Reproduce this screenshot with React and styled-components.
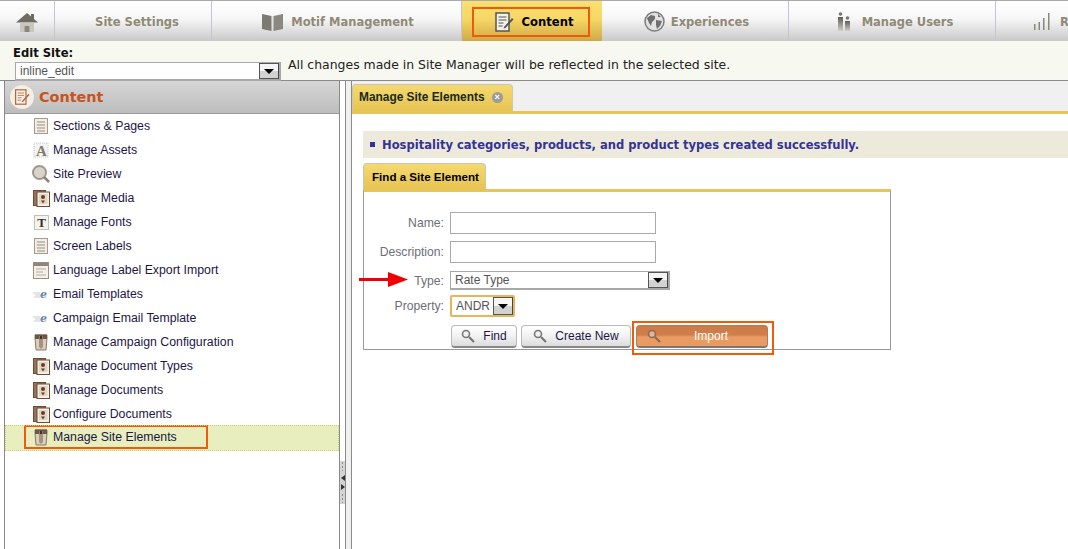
import React from 'react';
import styled, { createGlobalStyle } from 'styled-components';

const Global = createGlobalStyle`
  html, body { margin: 0; padding: 0; height: 100%; overflow: hidden; background: #fff; }
  body { font-family: "Liberation Sans", Arial, sans-serif; font-size: 12px; color: #000; }
  * { box-sizing: border-box; }
`;

const Page = styled.div`
  position: relative;
  width: 1068px;
  height: 549px;
  display: flex;
  flex-direction: column;
  overflow: hidden;
`;

const TopNav = styled.div`
  height: 41px;
  flex: none;
  display: flex;
  border-top: 1px solid #a9a9a9;
  background: linear-gradient(#ffffff 0%, #f6f6f6 45%, #c9c9c9 100%);
`;

const NavItem = styled.div`
  flex: none;
  width: ${({ $w }) => $w}px;
  height: 100%;
  display: flex;
  align-items: center;
  justify-content: ${({ $start }) => ($start ? 'flex-start' : 'center')};
  gap: ${({ $gap }) => $gap ?? 8}px;
  padding-top: 1px;
  padding-left: ${({ $pl }) => $pl ?? 0}px;
  border-right: ${({ $last }) => ($last ? '0' : '1px solid #c4c4d4')};
  font-family: "DejaVu Sans", Verdana, sans-serif;
  font-weight: 700;
  font-size: 11.5px;
  color: #8f8a76;
  white-space: nowrap;
`;

const ActiveItem = styled.div`
  flex: none;
  width: 140px;
  height: 100%;
  padding: 7px 12px 3px 10px;
  background: linear-gradient(#fbdf72 0%, #f6d766 45%, #cfa946 100%);
  font-family: "DejaVu Sans", Verdana, sans-serif;
  font-weight: 700;
  font-size: 11.6px;
`;

const ActiveBox = styled.div`
  height: 30px;
  display: flex;
  align-items: center;
  justify-content: center;
  gap: 8px;
  padding-left: 5px;
  border: 2px solid #f25a0b;
  margin-top: -1px;
`;

const SiteBar = styled.div`
  height: 40px;
  flex: none;
  display: flex;
  flex-direction: column;
  padding: 5px 0 0 13px;
  background: #f7f8f0;
  border-bottom: 1px solid #8a8a8a;
  font-family: "DejaVu Sans", Verdana, sans-serif;
`;

const SiteLabel = styled.div`
  font-weight: 700;
  font-size: 11.6px;
  line-height: 15px;
  color: #111;
`;

const SiteRow = styled.div`
  display: flex;
  align-items: flex-start;
  margin: 1px 0 0 2px;
`;

const SiteNote = styled.div`
  font-size: 12.45px;
  line-height: 15px;
  margin: -5px 0 0 7px;
  color: #222;
  white-space: nowrap;
`;

const SelectBox = styled.div`
  width: ${({ $w }) => $w}px;
  height: ${({ $h }) => $h}px;
  flex: none;
  display: flex;
  align-items: center;
  justify-content: space-between;
  padding: 0 0 0 4px;
  background: #fff;
  border: ${({ $focus }) => ($focus ? '2px solid #e8b45c' : '2px solid #a8a8a8')};
  border-width: ${({ $focus }) => ($focus ? '2px' : '1px 2px 2px 1px')};
  border-radius: ${({ $focus }) => ($focus ? '2px' : '0')};
  font-family: "Liberation Sans", Arial, sans-serif;
  font-size: 12px;
  color: #555;
`;

const SelectArrow = styled.div`
  width: 20px;
  height: 100%;
  flex: none;
  display: flex;
  align-items: center;
  justify-content: center;
  border: 1px solid #555;
  border-right-color: #444;
  background: linear-gradient(#f5f5f5 50%, #d2d2d2 50%);
  &::after {
    content: '';
    border-left: 5px solid transparent;
    border-right: 5px solid transparent;
    border-top: 5px solid #000;
  }
`;

const Body = styled.div`
  flex: 1;
  display: flex;
  min-height: 0;
`;

const LeftPanel = styled.div`
  width: 336px;
  margin-left: 4px;
  flex: none;
  border-left: 1px solid #8a8a8a;
  border-right: 1px solid #8a8a8a;
`;

const PanelHead = styled.div`
  height: 33px;
  display: flex;
  align-items: center;
  gap: 5px;
  padding-left: 5px;
  background: linear-gradient(#d6d6d6, #bdbdbd);
  border-bottom: 1px solid #9a9a9a;
  font-family: "DejaVu Sans", Verdana, sans-serif;
  font-weight: 700;
  font-size: 14.4px;
  color: #c8531c;
`;

const Badge = styled.div`
  width: 24px;
  height: 24px;
  border-radius: 50%;
  background: #f4efe6;
  display: flex;
  align-items: center;
  justify-content: center;
`;

const MenuRow = styled.div`
  height: ${({ $selected }) => ($selected ? '26px' : '24px')};
  margin-top: ${({ $selected }) => ($selected ? '-1px' : '0')};
  display: flex;
  align-items: ${({ $selected }) => ($selected ? 'flex-start' : 'center')};
  padding-left: ${({ $selected }) => ($selected ? '19px' : '24px')};
  background: ${({ $selected }) => ($selected ? '#e8eebd' : 'transparent')};
  outline: ${({ $selected }) => ($selected ? '1px dotted #cfcf80' : 'none')};
  outline-offset: -1px;
`;

const MenuMark = styled.div`
  display: flex;
  align-items: center;
  height: 24px;
  width: ${({ $selected }) => ($selected ? '184px' : 'auto')};
  border: ${({ $selected }) => ($selected ? '2px solid #f25a0b' : '0')};
  padding-left: ${({ $selected }) => ($selected ? '3px' : '0')};
`;

const MenuIconCell = styled.div`
  width: 24px;
  height: 18px;
  flex: none;
  display: flex;
  align-items: center;
  justify-content: center;
`;

const MenuText = styled.span`
  font-size: 12.3px;
  color: #1d1647;
  white-space: nowrap;
`;

const Splitter = styled.div`
  width: 5px;
  flex: none;
  padding-top: 380px;
`;

const Handle = styled.div`
  width: 5px;
  height: 43px;
  background: #d4d4d4;
  display: flex;
  flex-direction: column;
  align-items: center;
  justify-content: center;
  gap: 3px;
`;

const HandleLeft = styled.div`
  border-top: 3px solid transparent;
  border-bottom: 3px solid transparent;
  border-right: 4px solid #333;
`;

const HandleRight = styled(HandleLeft)`
  border-right: 0;
  border-left: 4px solid #333;
`;

const HandleDash = styled.div`
  width: 1px;
  height: 10px;
  margin: 1px 0;
  background: repeating-linear-gradient(#888 0 2px, transparent 2px 4px);
`;

const Gutter = styled.div`
  width: 7px;
  flex: none;
  background: #f0f0f0;
  border-left: 1px solid #8a8a8a;
  border-right: 1px solid #8a8a8a;
`;

const Main = styled.div`
  flex: 1;
  min-width: 0;
  display: flex;
  flex-direction: column;
`;

const TabStrip = styled.div`
  height: 33px;
  flex: none;
  display: flex;
  align-items: flex-end;
  background: #f0f0f0;
  border-bottom: 3px solid #e5c65a;
`;

const MainTab = styled.div`
  height: 27px;
  width: 161px;
  display: flex;
  align-items: center;
  gap: 7px;
  padding: 0 0 2px 6px;
  background: linear-gradient(#f5d970, #e7c452);
  border: 1px solid #c9c9b0;
  border-bottom: 0;
  border-radius: 4px 4px 0 0;
  font-weight: 700;
  font-size: 11.9px;
  color: #1a2a1a;
  white-space: nowrap;
`;

const CloseDot = styled.div`
  width: 11px;
  height: 11px;
  border-radius: 50%;
  background: #9b9b9b;
  color: #fff;
  font-size: 9px;
  line-height: 11px;
  text-align: center;
`;

const Content = styled.div`
  padding: 17px 0 0 11px;
`;

const Message = styled.div`
  height: 27px;
  display: flex;
  align-items: center;
  gap: 7px;
  padding-left: 7px;
  background: #eeeadb;
  font-family: "DejaVu Sans", Verdana, sans-serif;
  font-weight: 700;
  font-size: 11.55px;
  color: #333399;
  white-space: nowrap;
`;

const Bullet = styled.span`
  width: 5px;
  height: 5px;
  background: #333399;
  flex: none;
`;

const FindTab = styled.div`
  width: 123px;
  height: 26px;
  margin-top: 5px;
  display: flex;
  align-items: center;
  justify-content: center;
  padding-left: 2px;
  background: linear-gradient(#f5d970, #e7c452);
  border: 1px solid #c9c9b0;
  border-bottom: 0;
  border-radius: 4px 4px 0 0;
  font-weight: 700;
  font-size: 11.6px;
`;

const FormBox = styled.div`
  width: 528px;
  height: 161px;
  border: 1px solid #999;
  border-top: 3px solid #e5c65a;
  padding-top: 20px;
`;

const FormRow = styled.div`
  display: flex;
  align-items: center;
  height: ${({ $h }) => $h}px;
  margin-bottom: ${({ $mb }) => $mb}px;
`;

const FormLabel = styled.label`
  width: 80px;
  flex: none;
  text-align: right;
  color: #6e6e78;
  font-size: 12.2px;
`;

const TextBox = styled.input`
  width: 206px;
  height: 22px;
  margin-left: 6px;
  border: 1px solid #aaa;
  background: #fff;
  padding: 0 4px;
`;

const SelectSlot = styled.div`
  margin-left: 6px;
`;

const ButtonRow = styled.div`
  display: flex;
  align-items: flex-start;
  gap: 4px;
  padding-left: 87px;
`;

const Button = styled.button`
  width: ${({ $w }) => $w}px;
  height: 23px;
  display: flex;
  align-items: center;
  justify-content: center;
  gap: ${({ $gap }) => $gap ?? 8}px;
  padding: 0;
  border: 1px solid #bbb;
  border-bottom: 2px solid #888;
  border-radius: 4px;
  background: linear-gradient(#ffffff, #f2f2f2 50%, #dcdcdc);
  font-family: inherit;
  font-size: 12px;
  color: #1d1647;
`;

const ImportMark = styled.div`
  border: 2px solid #f25a0b;
  padding: 2px 4px 5px 2px;
  margin: -4px 0 -7px -3px;
`;

const ImportButton = styled(Button)`
  border-color: #b57a4f;
  border-bottom-color: #777;
  background: linear-gradient(#cd7a48 0%, #cf7f4c 45%, #ea9d63 55%, #e89a60 100%);
  color: #fff;
  justify-content: flex-start;
  padding-left: 10px;
  gap: 33px;
`;

const ArrowFloat = styled.div`
  position: absolute;
  left: 359px;
  top: 272px;
  line-height: 0;
`;

const Doc = () => (
  <svg width="14" height="16" viewBox="0 0 14 16">
    <rect x="0.5" y="0.5" width="13" height="15" fill="#f1ece4" stroke="#a89a8c" />
    <path d="M3 4h8M3 7h8M3 10h8M3 13h8" stroke="#9a9186" />
  </svg>
);

const AssetA = () => (
  <svg width="17" height="16" viewBox="0 0 17 16">
    <rect x="1" y="1" width="14" height="14" fill="#f3f3f3" stroke="#c8c8c8" strokeDasharray="1 1" />
    <text x="8.500" y="14" textAnchor="middle" fontFamily="Liberation Serif, serif" fontWeight="700" fontSize="15" fill="#85796c">A</text>
  </svg>
);

const Magnifier = () => (
  <svg width="18" height="18" viewBox="0 0 18 18">
    <circle cx="7.5" cy="7.5" r="6.5" fill="#d8d4cd" stroke="#a0978c" strokeWidth="2" />
    <path d="M12 12l5 5" stroke="#8d8377" strokeWidth="2.5" />
  </svg>
);

const Media = () => (
  <svg width="17" height="17" viewBox="0 0 17 17">
    <rect x="0.5" y="0.5" width="12" height="15" fill="#9a7258" stroke="#6b4a36" />
    <rect x="4" y="2" width="12.5" height="14.500" fill="#f4efe6" stroke="#6b4a36" />
    <rect x="6" y="4" width="8.5" height="10" fill="#e0d6c6" />
    <circle cx="10" cy="7" r="2" fill="#6b3a20" />
    <path d="M8 10.500h4l-2 3z" fill="#6b3a20" />
  </svg>
);

const FontT = () => (
  <svg width="15" height="15" viewBox="0 0 15 15">
    <rect x="0.5" y="0.5" width="14" height="14" fill="#f5f3ee" stroke="#c5c0b5" />
    <text x="7.5" y="12" textAnchor="middle" fontFamily="Liberation Serif, serif" fontWeight="700" fontSize="13" fill="#333">T</text>
  </svg>
);

const Lang = () => (
  <svg width="16" height="17" viewBox="0 0 16 17">
    <rect x="0.5" y="0.5" width="15" height="16" fill="#f4f0e8" stroke="#9a8f82" />
    <rect x="1" y="1" width="14" height="3" fill="#8f8578" />
    <path d="M3 7h10M3 10h7M3 13h10" stroke="#b4aca0" />
  </svg>
);

const Email = () => (
  <svg width="16" height="12" viewBox="0 0 16 12">
    <path d="M0 5h7M2 7h5M1 9h6" stroke="#c9c9c9" />
    <text x="7" y="10" fontFamily="DejaVu Serif, serif" fontStyle="italic" fontWeight="700" fontSize="11" fill="#5f85a8">e</text>
  </svg>
);

const KeyDoc = () => (
  <svg width="14" height="18" viewBox="0 0 14 18">
    <path d="M1 2h12v3l-1 12H2L1 5z" fill="#d9cfc0" stroke="#8a7a68" />
    <path d="M1 1.500h12V6H1z" fill="#6d5847" />
    <path d="M5 3h4v11l-2 2-2-2z" fill="#a8937a" />
    <rect x="5.800" y="3" width="2.400" height="3" fill="#3f3025" />
  </svg>
);

const HomeIcon = () => (
  <svg width="22" height="20" viewBox="0 0 22 20">
    <path d="M15 2h3v5h-3z" fill="#6f6b60" />
    <path d="M11 1L0 10.500h22z" fill="#6f6b60" />
    <path d="M4 10.500h14V20h-4.500v-6h-5v6H4z" fill="#c9c7bd" />
    <path d="M8.500 14h5v6h-5z" fill="#8a8578" />
  </svg>
);

const BookIcon = () => (
  <svg width="21" height="18" viewBox="0 0 21 18">
    <path d="M0 1l9.500 2v15L0 16z" fill="#7c7a72" />
    <path d="M21 1l-9.500 2v15L21 16z" fill="#8a8880" />
    <path d="M10 3h1v15h-1z" fill="#e0e0e0" />
  </svg>
);

const EditIcon = ({ size = 20, stroke = '#555' }) => (
  <svg width={size} height={size} viewBox="0 0 20 20">
    <rect x="2" y="1" width="13" height="18" fill="#f3f1e9" stroke={stroke} strokeWidth="1.500" />
    <path d="M4.500 5h8M4.500 8h8M4.500 11h5M4.500 14h4" stroke={stroke} />
    <path d="M10 15l8-9 1.500 1.500-8 8.500-2 .5z" fill={stroke} />
  </svg>
);

const GlobeIcon = () => (
  <svg width="21" height="21" viewBox="0 0 21 21">
    <circle cx="10.500" cy="10.500" r="9.500" fill="#e2e2e2" stroke="#7d7d7d" strokeWidth="1.500" />
    <path d="M3 7l4-3 4 1 0 3-3 3-1 4-2-3zM12 9l6 1-2 5-3 3-1-4zM14 3l3 3-3 0z" fill="#6f6f6f" />
  </svg>
);

const UsersIcon = () => (
  <svg width="14" height="19" viewBox="0 0 14 19">
    <defs>
      <linearGradient id="userFade" x1="0" y1="0" x2="0" y2="1">
        <stop offset="0" stopColor="#5f5d55" />
        <stop offset="1" stopColor="#d0d0cc" />
      </linearGradient>
    </defs>
    <circle cx="3.500" cy="2" r="1.800" fill="#77756c" />
    <rect x="1" y="5" width="5" height="14" fill="url(#userFade)" />
    <circle cx="10.500" cy="6" r="1.800" fill="#77756c" />
    <rect x="8" y="9" width="5" height="10" fill="url(#userFade)" />
  </svg>
);

const BarsIcon = () => (
  <svg width="19" height="19" viewBox="0 0 19 19">
    <path d="M1 12h1.500v6H1zM5.500 10H7v8H5.500zM10 6h1.500v12H10zM15 1h1.500v17H15z" fill="#8a887e" />
  </svg>
);

const SearchGlyph = ({ color = '#777' }) => (
  <svg width="14" height="14" viewBox="0 0 14 14">
    <circle cx="5" cy="5" r="3.500" fill="#eee" fillOpacity="0.5" stroke={color} strokeWidth="1.600" />
    <path d="M8 8l5 5" stroke={color} strokeWidth="2.200" />
  </svg>
);

const RedArrow = () => (
  <svg width="49" height="15" viewBox="0 0 49 15">
    <path d="M0 6h29V0l20 7.500L29 15V9H0z" fill="#f00000" />
  </svg>
);

const menu = [
  ['Sections & Pages', Doc],
  ['Manage Assets', AssetA],
  ['Site Preview', Magnifier],
  ['Manage Media', Media],
  ['Manage Fonts', FontT],
  ['Screen Labels', Doc],
  ['Language Label Export Import', Lang],
  ['Email Templates', Email],
  ['Campaign Email Template', Email],
  ['Manage Campaign Configuration', KeyDoc],
  ['Manage Document Types', Media],
  ['Manage Documents', Media],
  ['Configure Documents', Media],
  ['Manage Site Elements', KeyDoc, true],
];

export default function App() {
  return (
    <Page>
      <Global />
      <TopNav>
        <NavItem $w={55}><HomeIcon /></NavItem>
        <NavItem $w={157} $pl={8}>Site Settings</NavItem>
        <NavItem $w={250} $pl={3}><BookIcon />Motif Management</NavItem>
        <ActiveItem>
          <ActiveBox><EditIcon />Content</ActiveBox>
        </ActiveItem>
        <NavItem $w={187} $pl={3} $gap={6}><GlobeIcon />Experiences</NavItem>
        <NavItem $w={207} $pl={6} $gap={11}><UsersIcon />Manage Users</NavItem>
        <NavItem $w={150} $start $pl={37} $last><BarsIcon />Reports</NavItem>
      </TopNav>

      <SiteBar>
        <SiteLabel>Edit Site:</SiteLabel>
        <SiteRow>
          <SelectBox $w={266} $h={19}>inline_edit<SelectArrow /></SelectBox>
          <SiteNote>All changes made in Site Manager will be reflected in the selected site.</SiteNote>
        </SiteRow>
      </SiteBar>

      <Body>
        <LeftPanel>
          <PanelHead>
            <Badge><EditIcon size={16} stroke="#b4683a" /></Badge>
            Content
          </PanelHead>
          <div>
            {menu.map(([label, Icon, selected]) => (
              <MenuRow key={label} $selected={selected}>
                <MenuMark $selected={selected}>
                  <MenuIconCell><Icon /></MenuIconCell>
                  <MenuText>{label}</MenuText>
                </MenuMark>
              </MenuRow>
            ))}
          </div>
        </LeftPanel>

        <Splitter>
          <Handle>
            <HandleDash />
            <HandleLeft />
            <HandleRight />
            <HandleDash />
          </Handle>
        </Splitter>
        <Gutter />

        <Main>
          <TabStrip>
            <MainTab>Manage Site Elements<CloseDot>×</CloseDot></MainTab>
          </TabStrip>
          <Content>
            <Message><Bullet />Hospitality categories, products, and product types created successfully.</Message>
            <FindTab>Find a Site Element</FindTab>
            <FormBox>
              <FormRow $h={22} $mb={7}>
                <FormLabel>Name:</FormLabel>
                <TextBox />
              </FormRow>
              <FormRow $h={22} $mb={8}>
                <FormLabel>Description:</FormLabel>
                <TextBox />
              </FormRow>
              <FormRow $h={19} $mb={5}>
                <FormLabel>Type:</FormLabel>
                <SelectSlot>
                  <SelectBox $w={220} $h={19}>Rate Type<SelectArrow /></SelectBox>
                </SelectSlot>
              </FormRow>
              <FormRow $h={22} $mb={8}>
                <FormLabel>Property:</FormLabel>
                <SelectSlot>
                  <SelectBox $w={65} $h={22} $focus>ANDR<SelectArrow /></SelectBox>
                </SelectSlot>
              </FormRow>
              <ButtonRow>
                <Button $w={66}><SearchGlyph />Find</Button>
                <Button $w={110}><SearchGlyph />Create New</Button>
                <ImportMark>
                  <ImportButton $w={132}><SearchGlyph color="#8a6a55" />Import</ImportButton>
                </ImportMark>
              </ButtonRow>
            </FormBox>
          </Content>
        </Main>
      </Body>
      <ArrowFloat><RedArrow /></ArrowFloat>
    </Page>
  );
}
